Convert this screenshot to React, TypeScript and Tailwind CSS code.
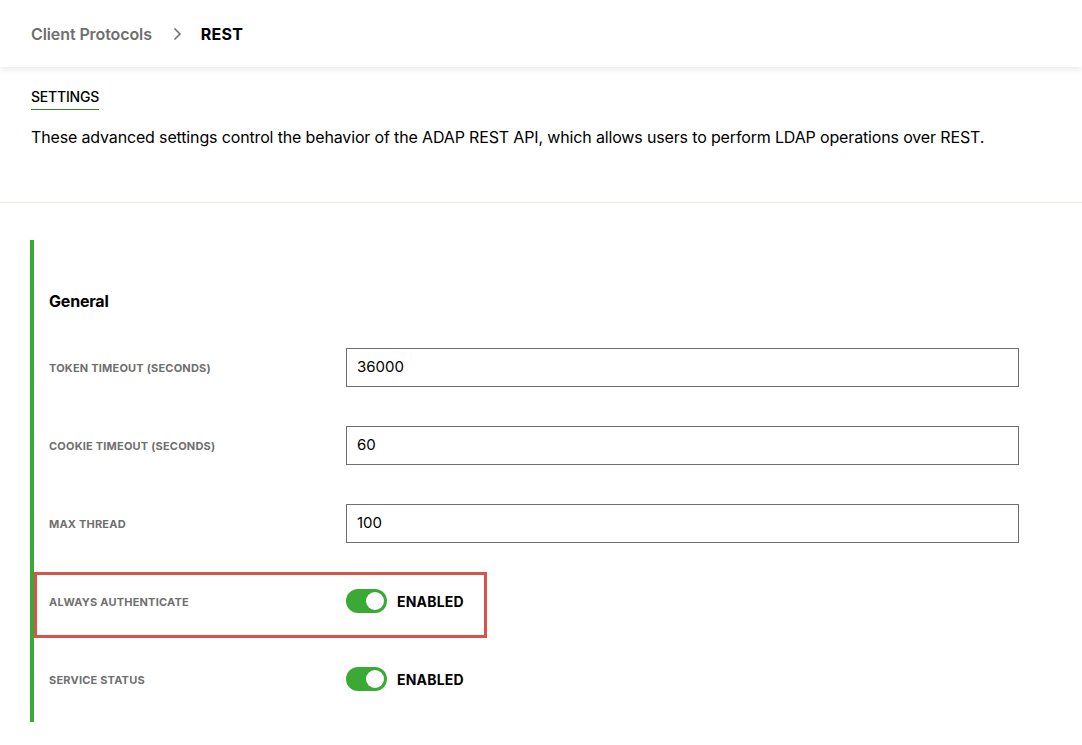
import React from 'react';

const font = { fontFamily: 'Inter, "Liberation Sans", sans-serif' };

function Toggle() {
  return (
    <div className="flex items-center">
      <div className="relative w-[41px] h-[24px] rounded-full bg-[#3aaa35]">
        <div className="absolute right-[3px] top-[3px] w-[18px] h-[18px] rounded-full bg-white" />
      </div>
      <span className="ml-[10px] text-[14px] font-bold text-black tracking-[0.2px]">ENABLED</span>
    </div>
  );
}

function Label({ text }: { text: string }) {
  return <div className="w-[297px] pt-[2px] text-[11px] font-bold text-[#6f6f6f] tracking-[0.2px]">{text}</div>;
}

function Row({ label, children }: { label: string; children: React.ReactNode }) {
  return (
    <div className="flex items-center h-[78px]">
      <Label text={label} />
      {children}
    </div>
  );
}

function Field({ value }: { value: string }) {
  return (
    <div className="w-[673px] h-[39px] border border-[#6f6f6f] flex items-center px-[10px] text-[15px] text-black">
      {value}
    </div>
  );
}

export default function App() {
  return (
    <div className="min-h-screen bg-white" style={font}>
      {/* header */}
      <header className="h-[67px] flex items-center px-[31px] bg-white shadow-[0_3px_6px_rgba(0,0,0,0.08)] relative z-10">
        <span className="text-[16px] font-semibold text-[#6f6f6f] tracking-[-0.1px]">Client Protocols</span>
        <svg className="ml-[18px] mr-[17px]" width="14" height="14" viewBox="0 0 14 14" fill="none">
          <path d="M4.5 1.5 L10 7 L4.5 12.5" stroke="#6f6f6f" strokeWidth="1.6" />
        </svg>
        <span className="text-[16px] font-bold text-black tracking-[0.2px]">REST</span>
      </header>

      {/* settings intro */}
      <section className="px-[31px] pt-[17px] pb-[53px] border-b border-[#e3eddf]">
        <div className="inline-block text-[14px] font-medium text-black border-b border-[#2f8a2a] pb-[2px] tracking-[-0.2px]">
          SETTINGS
        </div>
        <p className="mt-[15px] text-[16px] text-black tracking-[-0.15px]">
          These advanced settings control the behavior of the ADAP REST API, which allows users to perform LDAP operations over REST.
        </p>
      </section>

      {/* general */}
      <section className="pl-[30px] pt-[37px]">
        <div className="border-l-[4px] border-[#3aaa35] pl-[15px] pb-[4px]">
          <h2 className="pt-[49px] pb-[15px] text-[16px] font-bold text-black tracking-[-0.2px]">General</h2>
          <Row label="TOKEN TIMEOUT (SECONDS)"><Field value="36000" /></Row>
          <Row label="COOKIE TIMEOUT (SECONDS)"><Field value="60" /></Row>
          <Row label="MAX THREAD"><Field value="100" /></Row>
          <div className="h-[78px] pt-[10px]">
            <div className="-ml-[15px] w-[453px] h-[66px] border-[3px] border-[#d9534a] flex items-center pl-[12px] pb-[8px]">
              <Label text="ALWAYS AUTHENTICATE" />
              <Toggle />
            </div>
          </div>
          <Row label="SERVICE STATUS"><Toggle /></Row>
        </div>
      </section>
    </div>
  );
}
